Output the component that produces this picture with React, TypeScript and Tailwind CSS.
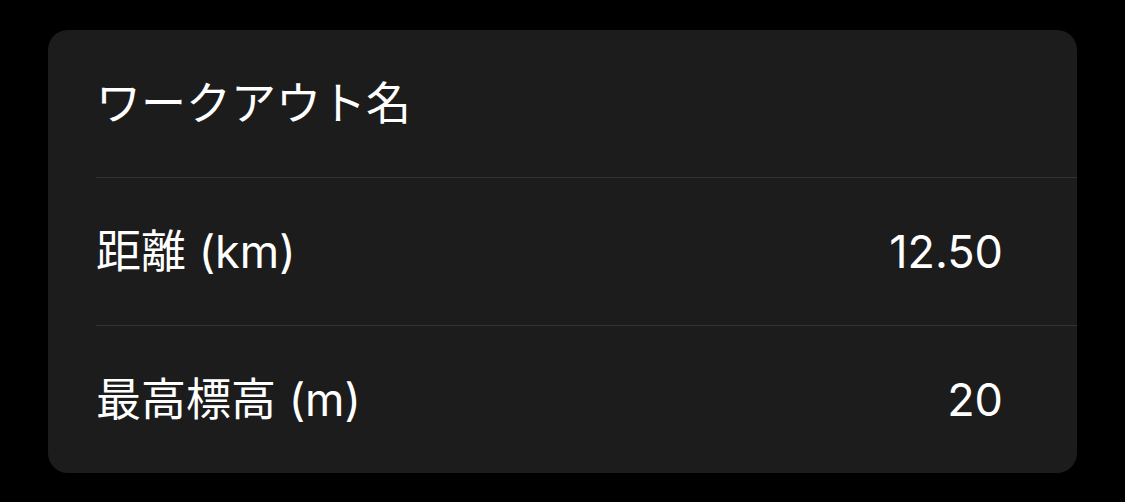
const rows = [
  { label: 'ワークアウト名', value: '' },
  { label: '距離 (km)', value: '12.50' },
  { label: '最高標高 (m)', value: '20' },
];

export default function App() {
  return (
    <div
      className="w-[1125px] h-[502px] bg-black pt-[30px] pl-[48px]"
      style={{ fontFamily: 'Inter, "Noto Sans CJK JP", sans-serif' }}
    >
      <div className="w-[1029px] bg-[#1c1c1c] rounded-[20px] overflow-hidden flex flex-col">
        {rows.map((row, i) => (
          <div key={row.label} className="flex flex-col">
            {i > 0 && <div className="ml-[48px] h-px bg-[#333333]" />}
            <div className="h-[147px] flex items-center justify-between pl-[48px] pr-[74px] text-[45px] text-white leading-none">
              <span>{row.label}</span>
              <span>{row.value}</span>
            </div>
          </div>
        ))}
      </div>
    </div>
  );
}
